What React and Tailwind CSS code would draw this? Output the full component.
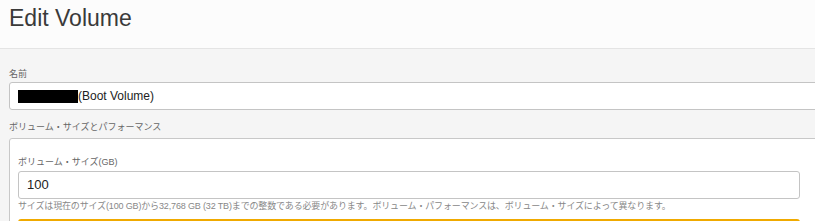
const FONT = "font-['Liberation_Sans','Noto_Sans_CJK_JP',sans-serif]";

export default function App() {
  return (
    <div className={`w-[815px] h-[221px] overflow-hidden bg-[#f5f5f5] ${FONT}`}>
      {/* header */}
      <div className="h-[49px] bg-[#fcfcfc] border-b border-[#e4e4e4] pl-[9px] pt-[4px]">
        <h1 className="text-[23px] leading-[28px] text-[#3a3a3a]">Edit Volume</h1>
      </div>

      <div className="w-[840px] pl-[9px]">
        <div className="pt-[19px] text-[9px] leading-[12px] text-[#666]">名前</div>
        <div className="mt-[2px] h-[28px] bg-white border border-[#c4c4c4] rounded-[3px] flex items-center pl-[8px]">
          <span className="inline-block w-[60px] h-[13px] bg-black" />
          <span className="text-[12px] text-[#222]">(Boot Volume)</span>
        </div>

        <div className="mt-[11px] text-[9px] leading-[12px] text-[#666]">ボリューム・サイズとパフォーマンス</div>

        <div className="mt-[5px] bg-white border border-[#c8c8c8] rounded-tl-[3px] pl-[8px] pt-[17px]">
          <div className="text-[9px] leading-[12px] text-[#666]">ボリューム・サイズ(GB)</div>
          <div className="mt-[3px] w-[782px] h-[28px] border border-[#c4c4c4] rounded-[3px] flex items-center pl-[8px] text-[13px] text-[#222]">
            100
          </div>
          <div className="mt-[1px] text-[9px] leading-[12px] text-[#888] whitespace-nowrap tracking-[-0.15px]">
            サイズは現在のサイズ(100 GB)から32,768 GB (32 TB)までの整数である必要があります。ボリューム・パフォーマンスは、ボリューム・サイズによって異なります。
          </div>
          <div className="mt-[7px] w-[782px] h-[20px] border-t-2 border-x border-[#f0aa00] rounded-t-[3px] bg-[#fffdf5]" />
        </div>
      </div>
    </div>
  );
}
